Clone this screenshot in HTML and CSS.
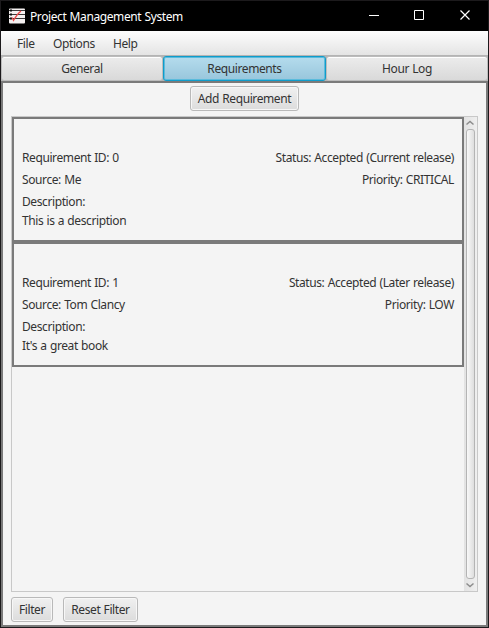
FILE: index.html
```html
<!DOCTYPE html>
<html lang="en">
<head>
<meta charset="utf-8">
<title>Project Management System</title>
<link rel="stylesheet" href="styles.css">
</head>
<body>
<div class="window">
  <header class="titlebar">
    <svg class="app-icon" width="16" height="16" viewBox="0 0 16 16">
      <rect width="16" height="15" y=".5" rx="1" fill="#f4f0f0"/>
      <path d="M0 2.500h16M0 6.500h16M0 10.500h16" stroke="#3c3939"/>
      <path d="M1 2.500h2M1 6.500h2M1 10.500h2" stroke="#111" stroke-width="2"/>
      <path d="M3 9.500L4.500 12.500Q8 6 12 3" fill="none" stroke="#ef4848" stroke-width="1.200"/>
    </svg>
    <h1 class="title">Project Management System</h1>
    <div class="controls">
      <svg width="46" height="30"><path d="M18 14.500h10" stroke="#fff"/></svg>
      <svg width="46" height="30"><path d="M17.500 9.500h9v9h-9z" fill="none" stroke="#fff"/></svg>
      <svg width="46" height="30"><path d="M17.500 9.500l9 9m0-9l-9 9" stroke="#fff" stroke-width="1.200"/></svg>
    </div>
  </header>
  <nav class="menu"><span class="m-file">File</span><span class="m-options">Options</span><span class="m-help">Help</span></nav>
  <div class="tabs">
    <button class="tab"><span>General</span></button>
    <button class="tab selected"><span>Requirements</span></button>
    <button class="tab"><span>Hour Log</span></button>
  </div>
  <main class="pane">
    <button class="btn add">Add Requirement</button>
    <div class="scroll">
      <div class="list">
        <section class="card">
          <div class="row"><span>Requirement ID: 0</span><span>Status: Accepted (Current release)</span></div>
          <div class="row"><span>Source: Me</span><span>Priority: CRITICAL</span></div>
          <div class="row">Description:</div>
          <p class="desc">This is a description</p>
        </section>
        <section class="card">
          <div class="row"><span>Requirement ID: 1</span><span>Status: Accepted (Later release)</span></div>
          <div class="row"><span>Source: Tom Clancy</span><span>Priority: LOW</span></div>
          <div class="row">Description:</div>
          <p class="desc">It's a great book</p>
        </section>
      </div>
      <div class="scrollbar">
        <svg width="13" height="12"><path d="M2.500 7.500l3.500-3 3.500 3" fill="none" stroke="#8c8c8c" stroke-width="1.500"/></svg>
        <div class="thumb"></div>
        <svg width="13" height="12"><path d="M2.500 4.500l3.500 3 3.500-3" fill="none" stroke="#8c8c8c" stroke-width="1.500"/></svg>
      </div>
    </div>
    <footer class="actions"><button class="btn filter">Filter</button><button class="btn reset">Reset Filter</button></footer>
  </main>
</div>
</body>
</html>
```
FILE: styles.css
```css
* { box-sizing: border-box; }
body { margin: 0; background: #f4f4f4; }
.window {
  width: 489px; height: 628px; display: flex; flex-direction: column;
  border: 1px solid #1c1a1c; background: #f4f4f4; overflow: hidden;
  font: 12px/16px "Noto Sans", "Open Sans", sans-serif;
  letter-spacing: -0.4px; word-spacing: 0.5px; color: #333; white-space: nowrap;
}
button { font: inherit; letter-spacing: inherit; word-spacing: inherit; color: inherit; padding: 0; margin: 0; }
.titlebar { height: 30px; flex: none; display: flex; align-items: center; background: #000; color: #fff; padding-left: 8px; }
.app-icon { flex: none; }
.title { margin: 0 0 0 5px; padding-top: 1px; font: inherit; }
.controls { display: flex; margin-left: auto; margin-right: -1px; }
.menu { height: 24px; flex: none; display: flex; align-items: center; padding: 2px 0 0 16px; background: linear-gradient(#fdfdfd, #e4e4e4); }
.m-file { width: 36px; }
.m-options { width: 60px; }
.tabs { height: 26px; flex: none; display: grid; grid-template-columns: 162px 163px 162px; background: #b4b4b4; padding-top: 1px; }
.tab { border: 1px solid #bcbcbc; border-radius: 3px; background: linear-gradient(#ececec, #d9d9d9); box-shadow: inset 0 1px #fff; padding-top: 1px; }
.tab.selected { border-color: #0f9ccb; background: linear-gradient(#b5dced, #98c6dc); box-shadow: inset 0 0 0 1px #5bbbdc; }
.pane { flex: 1; border: 2px solid #7a7a7a; padding: 3px 8px; display: flex; flex-direction: column; }
.btn { height: 25px; border: 1px solid #b9b9b9; border-radius: 3px; background: linear-gradient(#f0f0f0, #dcdcdc); box-shadow: inset 0 0 0 1px #f7f7f7; padding-top: 1px; }
.add { width: 109px; align-self: center; }
.scroll { display: flex; height: 476px; margin-top: 5px; width: 467px; border: 1px solid #c8c8c8; }
.list { width: 452px; }
.card { height: 125px; border: 2px solid #7a7a7a; padding: 31px 8px 0; }
.row { height: 22px; display: flex; justify-content: space-between; }
.desc { margin: -3px 0 0; }
.scrollbar { width: 13px; background: linear-gradient(90deg, #e2e2e2, #efefef); display: flex; flex-direction: column; }
.scrollbar svg { flex: none; }
.thumb { flex: 1; width: 9px; margin-left: 2px; border: 1px solid #b4b4b4; border-radius: 3px; background: linear-gradient(90deg, #f8f8f8, #dedede); }
.actions { display: flex; gap: 10px; margin-top: 5px; }
.filter { width: 42px; }
.reset { width: 75px; }
```
